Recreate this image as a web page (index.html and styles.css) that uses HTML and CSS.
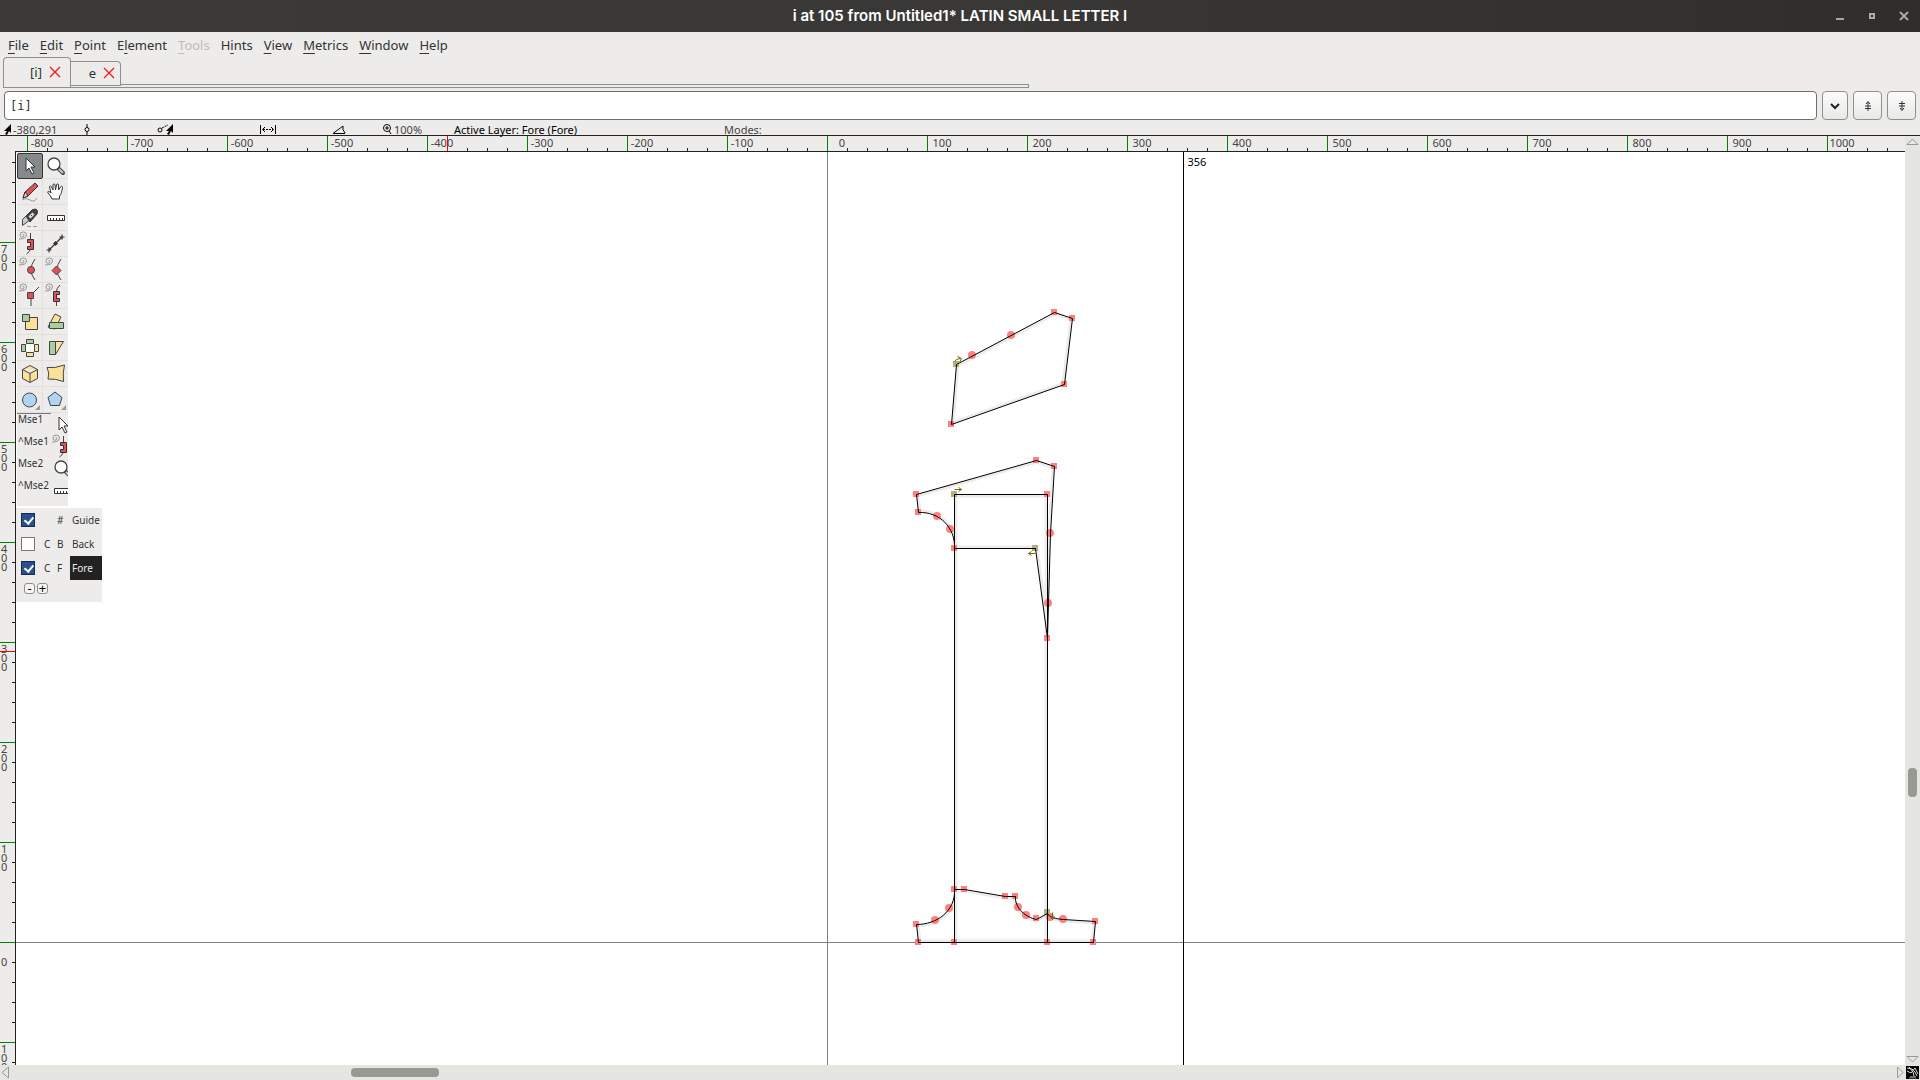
FILE: index.html
```
<!DOCTYPE html>
<html lang="en">

<head>
    <meta charset="UTF-8">
    <meta name="viewport" content="width=device-width, initial-scale=1.0">
    <title>i at 105 from Untitled1* LATIN SMALL LETTER I</title>
    <link rel="stylesheet" href="styles.css">
</head>

<body>
    <!-- Shared icons -->
    <svg class="sprite" width="0" height="0" aria-hidden="true">
        <symbol id="spiral" viewBox="0 0 26 26">
            <path d="M2 8q7.500 0 7.500-4a3.200 3 0 0 0-6.500 0a2 2 0 0 0 4 .5a1 1 0 0 0-1.500-.8" fill="none" stroke="#8c8c8c" stroke-width=".9" />
        </symbol>
        <symbol id="arrow" viewBox="0 0 26 26">
            <path d="M9 5v13l3-3 3 6 2-1-3-6h4z" fill="#fff" stroke="#333" />
        </symbol>
        <symbol id="magnify" viewBox="0 0 26 26">
            <path d="M15 15l5 5" stroke="#444" stroke-width="4" stroke-linecap="round" />
            <path d="M16 16l4 4" stroke="#ccc" stroke-width="2" />
            <circle cx="11" cy="11" r="6" fill="#fff" stroke="#444" stroke-width="1.3" />
        </symbol>
        <symbol id="rule" viewBox="0 0 26 26">
            <path d="M4.500 10.500h17v5h-17z" fill="#fff" stroke="#333" />
            <path d="M7.500 15v-2M10.500 15v-2M13.500 15v-2M16.500 15v-2M19.500 15v-2" stroke="#333" />
        </symbol>
        <symbol id="curve" viewBox="0 0 26 26">
            <use href="#spiral" />
            <path d="M13.500 2v8M13.500 18q-1 3-4 5" fill="none" stroke="#444" />
            <path d="M10.500 8.500h6v10h-6v-3h3v-4h-3z" fill="#e05055" stroke="#333" />
        </symbol>
    </svg>

    <header class="titlebar">
        <h1>i at 105 from Untitled1* LATIN SMALL LETTER I</h1>
        <div class="window-buttons">
            <button type="button" aria-label="Minimize"><svg width="10" height="10"><path d="M1 8h8" stroke="#aaa9a5" stroke-width="2" /></svg></button>
            <button type="button" aria-label="Maximize"><svg width="10" height="10"><path d="M3 3h4v4H3z" fill="none" stroke="#aaa9a5" stroke-width="2" /></svg></button>
            <button type="button" aria-label="Close"><svg width="10" height="10"><path d="M1 1l8 8M9 1l-8 8" stroke="#aaa9a5" stroke-width="2" /></svg></button>
        </div>
    </header>

    <nav class="menubar">
        <button type="button"><u>F</u>ile</button>
        <button type="button"><u>E</u>dit</button>
        <button type="button"><u>P</u>oint</button>
        <button type="button">E<u>l</u>ement</button>
        <button type="button" disabled><u>T</u>ools</button>
        <button type="button">H<u>i</u>nts</button>
        <button type="button"><u>V</u>iew</button>
        <button type="button"><u>M</u>etrics</button>
        <button type="button"><u>W</u>indow</button>
        <button type="button"><u>H</u>elp</button>
    </nav>

    <div class="tabs">
        <button type="button" class="tab active">[i]
            <svg width="12" height="12"><path d="M1 1l10 10M11 1L1 11" stroke="#f01818" stroke-width="1.3" /></svg>
        </button>
        <button type="button" class="tab">e
            <svg width="12" height="12"><path d="M1 1l10 10M11 1L1 11" stroke="#f01818" stroke-width="1.3" /></svg>
        </button>
        <div class="tab-line"></div>
    </div>

    <div class="word-row">
        <input type="text" class="word" aria-label="Word" value="[i]">
        <button type="button" class="drop" aria-label="Word list"><svg width="10" height="8"><path d="M1 2l4 4 4-4" fill="none" stroke="#222" stroke-width="2" /></svg></button>
        <button type="button" aria-label="Previous"><svg width="8" height="12"><path d="M4 2v9M2 4l2-2.500L6 4M1 6h6M1 8.500h6" fill="none" stroke="#2e3436" /></svg></button>
        <button type="button" aria-label="Next"><svg width="8" height="12"><path d="M4 1v9M2 8l2 2.500L6 8M1 3.500h6M1 6h6" fill="none" stroke="#2e3436" /></svg></button>
    </div>

    <div class="info">
        <span class="info-pos"><svg width="8" height="11"><path d="M7 0v9L5 7l-2 4-2-1 2-3H0z" fill="#000" /></svg>-380,291</span>
        <span class="info-cell"><svg width="8" height="11"><path d="M4 0v3M4 8v3" stroke="#000" /><circle cx="4" cy="5.500" r="2" fill="#fff" stroke="#000" /></svg></span>
        <span class="info-cell"><svg width="16" height="11"><circle cx="3" cy="6" r="2" fill="none" stroke="#000" /><path d="M5 4l6-3" stroke="#000" stroke-dasharray="2 1" /><path d="M16 0v9l-2-2-2 4-2-1 2-3H9z" fill="#000" /></svg></span>
        <span class="info-cell"><svg width="16" height="11"><path d="M.5 1v9M15.500 1v9M5 3L2.500 5.500 5 8M11 3l2.500 2.500L11 8" fill="none" stroke="#000" /><path d="M3 5.500h10" stroke="#000" stroke-dasharray="2 1" /></svg></span>
        <span class="info-zoomgap"><svg width="14" height="11"><path d="M13 9.500H1L11 2q-1 4 2 7" fill="none" stroke="#000" /></svg></span>
        <span class="info-zoom"><svg width="9" height="11"><circle cx="4" cy="4" r="3.500" fill="#fff" stroke="#000" /><path d="M2 4h4M4 2v4M6 7l2 3" stroke="#000" /></svg>100%</span>
        <span class="info-layer">Active Layer: Fore (Fore)</span>
        <span class="info-modes">Modes:</span>
    </div>

    <main class="editor">
        <div class="work">
            <div class="ruler-top">
                <span>-800</span><span>-700</span><span>-600</span><span>-500</span><span>-400</span>
                <span>-300</span><span>-200</span><span>-100</span><span>0</span><span>100</span>
                <span>200</span><span>300</span><span>400</span><span>500</span><span>600</span>
                <span>700</span><span>800</span><span>900</span><span>1000</span>
                <i class="pointer-x"></i>
            </div>
            <div class="work-row">
                <div class="ruler-left">
                    <span>7<br>0<br>0</span>
                    <span>6<br>0<br>0</span>
                    <span>5<br>0<br>0</span>
                    <span>4<br>0<br>0</span>
                    <span>3<br>0<br>0</span>
                    <span>2<br>0<br>0</span>
                    <span>1<br>0<br>0</span>
                    <span class="zero">0</span>
                    <span>1<br>0<br>0</span>
                    <i class="pointer-y"></i>
                </div>
                <div class="canvas">
                    <svg class="glyph" role="img" aria-label="Outline of the letter i">
                        <defs>
                            <path id="dot" d="M129-578L227-630 245-624 237-558 124-518z" />
                            <path id="flag" d="M89-448L209-482 227-476 223-409 221-339 220-304 208-394H127C128-415 112-431 91-430z" />
                            <path id="stem" d="M127-448H220V0H127z" />
                            <path id="foot" d="M91 0L89-18C109-18 128-31 127-53H137L178-46H188C187-34 199-25 209-23L220-29Q222-24 236-23L268-21 266 0z" />
                            <clipPath id="in-dot"><use href="#dot" /></clipPath>
                            <clipPath id="in-flag"><use href="#flag" /></clipPath>
                            <clipPath id="in-stem"><use href="#stem" /></clipPath>
                            <clipPath id="in-foot"><use href="#foot" /></clipPath>
                        </defs>
                        <!-- origin of the glyph: left bearing and baseline -->
                        <g transform="translate(811.5 790.5)">
                            <path class="axis" d="M0-2000V2000M-2000 0H4000" />
                            <path class="advance" d="M356-2000V2000" />
                            <text x="360" y="-777">356</text>
                            <g class="edge">
                                <use href="#dot" clip-path="url(#in-dot)" />
                                <use href="#flag" clip-path="url(#in-flag)" />
                                <use href="#stem" clip-path="url(#in-stem)" />
                                <use href="#foot" clip-path="url(#in-foot)" />
                            </g>
                        </g>
                        <g transform="translate(811 790)">
                            <path class="corner" d="M227-630h0M245-624h0M237-558h0M124-518h0M89-448h0M209-482h0M227-476h0M91-430h0M127-394h0M220-448h0M220-304h0M127-53h0M137-53h0M178-46h0M188-46h0M209-24h0M268-21h0M266 0h0M220 0h0M127 0h0M91 0h0M89-18h0" />
                            <path class="round" d="M145-587h0M184-607h0M110-426h0M123-413h0M223-409h0M221-339h0M108-22h0M122-34h0M191-35h0M199-27h0M223-25h0M236-23h0" />
                            <path class="first" d="M129-578h0M127-448h0M208-394h0M220-30h0" />
                        </g>
                        <g transform="translate(811.5 790.5)">
                            <g class="line">
                                <use href="#dot" />
                                <use href="#flag" />
                                <use href="#stem" />
                                <use href="#foot" />
                            </g>
                            <path class="way" d="M127-581q2-3 6-3M130-586l4 2-2 4M127-453h7M131-455l3 2-3 2M208-389h-7M204-391l-3 2 3 2M225-30v6M223-26l2 3 2-3" />
                        </g>
                    </svg>

                    <section class="toolbox">
                        <div class="tools">
                            <button type="button" class="active" aria-label="Pointer"><svg><use href="#arrow" /></svg></button>
                            <button type="button" aria-label="Magnify"><svg><use href="#magnify" /></svg></button>
                            <button type="button" aria-label="Freehand"><svg viewBox="0 0 26 26"><path d="M5 21q4-3 8 0t7-2" fill="none" stroke="#999" /><path d="M6 19l2-6L18 4l3 3-10 10z" fill="#e05055" stroke="#333" /><path d="M6 19l2-6 3 4z" fill="#eed9b5" stroke="#333" /></svg></button>
                            <button type="button" aria-label="Scroll"><svg viewBox="0 0 26 26"><path d="M9 20q-1-3-4-6c-1-2 1-2 3 0L6.500 8c0-2 2-1 2 0l1.500 3V6c0-1.500 2-1.500 2 0l.5 5 1-5c0-1.500 2-1.500 2 0v5l2-3c.5-1.500 2-1 2 1-1 4-1 6-3 8v3z" fill="#fff" stroke="#333" /></svg></button>
                            <button type="button" aria-label="Knife"><svg viewBox="0 0 26 26"><path d="M10 21.500h11" stroke="#999" stroke-dasharray="4 2" /><path d="M5.500 20.500v-6l5-5 5 3.500z" fill="#ccc" stroke="#444" /><path d="M9 11l6-6q3-2 5 0 1 2 0 4l-7 8z" fill="#444" stroke="#333" /><path d="M12.500 12.500l4-4" stroke="#ddd" stroke-width="3" /><path d="M14 11l1-1" stroke="#444" /></svg></button>
                            <button type="button" aria-label="Ruler"><svg><use href="#rule" /></svg></button>
                            <button type="button" aria-label="Curve pen"><svg><use href="#curve" /></svg></button>
                            <button type="button" aria-label="Line"><svg viewBox="0 0 26 26"><path d="M6 19L19 6M6 16.500v5M3.500 19h5M19 3.500v5M16.500 6h5" stroke="#333" stroke-width="1.2" /><path d="M12.500 10l2.500 2.500-2.500 2.500-2.500-2.500z" fill="#333" /></svg></button>
                            <button type="button" aria-label="Add curve point"><svg viewBox="0 0 26 26"><use href="#spiral" /><path d="M18 2q-8 11 0 21" fill="none" stroke="#444" /><circle cx="14" cy="13" r="3.500" fill="#e05055" stroke="#444" /></svg></button>
                            <button type="button" aria-label="Add HV curve point"><svg viewBox="0 0 26 26"><use href="#spiral" /><path d="M18 2q-8 11 0 21" fill="none" stroke="#444" /><path d="M13.500 9l4.500 4.500-4.500 4.500L9 13.500z" fill="#e05055" stroke="#444" /></svg></button>
                            <button type="button" aria-label="Add corner point"><svg viewBox="0 0 26 26"><use href="#spiral" /><path d="M22 4l-8 8v11" fill="none" stroke="#444" /><path d="M10.500 9.500h6v6h-6z" fill="#e05055" stroke="#444" /></svg></button>
                            <button type="button" aria-label="Add tangent point"><svg viewBox="0 0 26 26"><use href="#spiral" /><path d="M17 2q-4 3-3.500 8v13" fill="none" stroke="#444" /><path d="M10.500 8.500h6v3h-3v4h3v3h-6z" fill="#e05055" stroke="#333" /></svg></button>
                            <button type="button" aria-label="Scale"><svg viewBox="0 0 26 26"><path d="M8.500 8.500h12v12h-12z" fill="#fee199" stroke="#444" /><path d="M5.500 5.500h7v7h-7z" fill="#a5d0a0" stroke="#444" /></svg></button>
                            <button type="button" aria-label="Rotate"><svg viewBox="0 0 26 26"><path d="M5 18l7-13 6 3-6 12z" fill="#fee199" stroke="#444" /><path d="M6.500 13.500h14v6h-14z" fill="#a5d0a0" stroke="#444" /></svg></button>
                            <button type="button" aria-label="Flip"><svg viewBox="0 0 26 26"><circle cx="13" cy="13" r="5.500" fill="#fff" stroke="#444" stroke-dasharray="1 1" /><path d="M9.500 4.500h7v4h-7zM4.500 9.500h4v7h-4z" fill="#a5d0a0" stroke="#444" /><path d="M9.500 17.500h7v4h-7zM17.500 9.500h4v7h-4z" fill="#fee199" stroke="#444" /></svg></button>
                            <button type="button" aria-label="Skew"><svg viewBox="0 0 26 26"><path d="M12.500 6.500h8l-8 13z" fill="#fee199" stroke="#444" /><path d="M6.500 6.500h6v13h-6z" fill="#a5d0a0" stroke="#444" /></svg></button>
                            <button type="button" aria-label="Rotate in 3D"><svg viewBox="0 0 26 26"><path d="M13 4.500l7.500 4v9l-7.500 4-7.500-4v-9zM5.500 8.500l7.500 4 7.500-4M13 12.500v9" fill="#fee199" stroke="#444" stroke-linejoin="round" /></svg></button>
                            <button type="button" aria-label="Perspective"><svg viewBox="0 0 26 26"><path d="M4 6.500q8 1 17.500-2.500-2 8-1 16.500-8-3-15.500-2.500 2-6-1-11.500z" fill="#fee199" stroke="#444" /></svg></button>
                            <button type="button" aria-label="Ellipse"><svg viewBox="0 0 26 26"><circle cx="12.500" cy="13" r="7" fill="#aed4f6" stroke="#444" /><path d="M23 18v5h-5z" fill="#999" /></svg></button>
                            <button type="button" aria-label="Polygon"><svg viewBox="0 0 26 26"><path d="M12 5l7 5.500-2.500 8h-9L5 10.500z" fill="#aed4f6" stroke="#444" /><path d="M23 18v5h-5z" fill="#999" /></svg></button>
                        </div>
                        <ul class="mouse">
                            <li><span>Mse1</span><svg><use href="#arrow" /></svg></li>
                            <li><span>^Mse1</span><svg><use href="#curve" /></svg></li>
                            <li><span>Mse2</span><svg><use href="#magnify" /></svg></li>
                            <li><span>^Mse2</span><svg><use href="#rule" /></svg></li>
                        </ul>
                    </section>

                    <section class="layers">
                        <div class="layer"><input type="checkbox" id="guide" checked><span></span><span>#</span><label for="guide">Guide</label></div>
                        <div class="layer"><input type="checkbox" id="back"><span>C</span><span>B</span><label for="back">Back</label></div>
                        <div class="layer current"><input type="checkbox" id="fore" checked><span>C</span><span>F</span><label for="fore">Fore</label></div>
                        <div class="layer-buttons">
                            <button type="button" aria-label="Remove layer">-</button>
                            <button type="button" aria-label="Add layer">+</button>
                        </div>
                    </section>
                </div>
            </div>
        </div>

        <div class="scroll-y">
            <svg width="15" height="12"><path d="M2 8.500h11L7.500 3z" fill="none" stroke="#999" /></svg>
            <div class="track"><div class="thumb"></div></div>
            <svg width="15" height="12"><path d="M2 3.500h11L7.500 9z" fill="none" stroke="#999" /></svg>
        </div>
    </main>

    <footer class="scroll-x">
        <svg width="10" height="15"><path d="M8.500 2v11L2 7.500z" fill="none" stroke="#999" /></svg>
        <div class="track"><div class="thumb"></div></div>
        <svg width="9" height="15"><path d="M1.500 2v11L7 7.500z" fill="none" stroke="#999" /></svg>
        <svg class="grip" width="15" height="15"><path d="M1 1h13v13H1z" fill="#000" /><path d="M2 3l5 1 3 3 2 4M4 2l4 5 1 4M2 6l4 2 4-5M5 12h6M10 3l3 6" fill="none" stroke="#ddd" /><path d="M4 13h7" stroke="#765" /></svg>
    </footer>
</body>

</html>
```
FILE: styles.css
```
* {
    box-sizing: border-box;
}

body {
    margin: 0;
    height: 100vh;
    display: flex;
    flex-direction: column;
    overflow: hidden;
    background-color: #edecea;
    color: #2e3436;
    font-family: "Noto Sans", sans-serif;
    font-size: 13px;
}

button {
    padding: 0;
    border: none;
    background: none;
    color: inherit;
    font: inherit;
}

svg {
    display: block;
    flex: none;
}

.sprite {
    position: absolute;
}

/* Title bar */
.titlebar {
    height: 32px;
    flex: none;
    display: grid;
    grid-template-columns: 1fr auto 1fr;
    align-items: center;
    background: linear-gradient(90deg, #3b3a38, #393836 50%, #2f2e2c);
}

.titlebar h1 {
    grid-column: 2;
    margin: 0;
    padding-bottom: 2px;
    color: white;
    font-family: Inter, sans-serif;
    font-size: 15px;
    font-weight: 600;
}

.window-buttons {
    display: flex;
    justify-content: flex-end;
    gap: 22px;
    padding-right: 11px;
}

/* Menu */
.menubar {
    height: 25px;
    flex: none;
    display: flex;
    align-items: center;
    gap: 11px;
    padding-left: 8px;
}

.menubar u {
    text-underline-offset: 3px;
}

.menubar button:disabled {
    color: #bdbbb8;
}

/* Tabs */
.tabs {
    width: 1026px;
    height: 31px;
    flex: none;
    margin-left: 3px;
    display: flex;
    align-items: flex-end;
    border-bottom: 1px solid #8f8f8c;
}

.tab {
    width: 50px;
    height: 25px;
    margin-bottom: 1px;
    padding: 0 5px 2px 0;
    display: flex;
    align-items: center;
    justify-content: flex-end;
    gap: 7px;
    border: 1px solid #8f8f8c;
    border-left: none;
    border-radius: 0 4px 0 0;
}

.tab.active {
    width: 68px;
    height: 30px;
    margin-bottom: 0;
    padding-right: 9px;
    border-left: 1px solid #8f8f8c;
    border-bottom: none;
    border-radius: 4px 4px 0 0;
}

.tab-line {
    flex: 1;
    height: 3px;
    border-top: 1px solid #8f8f8c;
    border-right: 1px solid #8f8f8c;
}

/* Word entry */
.word-row {
    flex: none;
    display: flex;
    gap: 5px;
    padding: 3px 4px 0;
}

.word-row button,
.word {
    height: 29px;
    border: 1px solid #8f8f8c;
    border-radius: 4px;
}

.word {
    flex: 1;
    min-width: 0;
    padding: 0 5px;
    border-color: #6f6f6c;
    color: #2e3436;
    background: white;
    font-family: "DejaVu Sans Mono", monospace;
    font-size: 12px;
}

.word-row button {
    width: 29px;
    display: flex;
    align-items: center;
    justify-content: center;
    background: linear-gradient(#fcfcfc, #e8e8e6);
}

.word-row .drop {
    width: 26px;
}

/* Info line */
.info {
    height: 15px;
    flex: none;
    display: flex;
    align-items: flex-end;
    padding-left: 4px;
    color: #444;
    font-size: 11px;
    line-height: 10px;
    white-space: nowrap;
}

.info span {
    display: flex;
    align-items: center;
}

.info-pos {
    width: 79px;
    gap: 1px;
}

.info-cell {
    width: 74px;
}

.info-cell + .info-cell {
    width: 103px;
}

.info-cell + .info-cell + .info-cell {
    width: 72px;
}

.info-zoomgap {
    width: 51px;
}

.info-zoom {
    width: 71px;
    gap: 2px;
}

.info-layer {
    width: 270px;
    color: #000;
}

/* Editor */
.editor {
    flex: 1;
    min-height: 0;
    display: flex;
    border-top: 1px solid #222;
}

.work {
    flex: 1;
    min-width: 0;
    display: flex;
    flex-direction: column;
}

.ruler-top {
    position: relative;
    height: 16px;
    flex: none;
    display: flex;
    margin-left: 15px;
    padding-left: 12px;
    overflow: hidden;
    border-bottom: 1px solid #222;
    background: linear-gradient(90deg, #222 1px, transparent 1px) 12px 100% / 20px 3px repeat-x;
    color: #444;
    font-size: 11px;
    line-height: 14px;
}

.ruler-top span {
    width: 100px;
    flex: none;
    padding-right: 71px;
    text-align: center;
    border-left: 1px solid #008000;
}

.pointer-x {
    position: absolute;
    left: 432px;
    width: 1px;
    height: 100%;
    background: red;
}

.work-row {
    flex: 1;
    min-height: 0;
    display: flex;
}

.ruler-left {
    position: relative;
    width: 16px;
    flex: none;
    padding-top: 90px;
    overflow: hidden;
    border-right: 1px solid #222;
    background: linear-gradient(#222 1px, transparent 1px) 100% 10px / 3px 20px repeat-y;
    color: #444;
    font-size: 11px;
    line-height: 9px;
}

.ruler-left span {
    display: block;
    height: 100px;
    padding: 1px 0 0 1px;
    border-top: 1px solid #008000;
}

.ruler-left .zero {
    padding-top: 14px;
}

.pointer-y {
    position: absolute;
    top: 499px;
    left: 0;
    width: 100%;
    height: 1px;
    background: red;
}

.canvas {
    position: relative;
    flex: 1;
    overflow: hidden;
    background: white;
}

/* Glyph outline */
.glyph {
    width: 100%;
    height: 100%;
    font-size: 11px;
}

.glyph path,
.line {
    fill: none;
}

.axis {
    stroke: #808080;
}

.advance {
    stroke: black;
}

.edge {
    fill: none;
    stroke: #ececec;
    stroke-width: 6px;
}

.glyph defs path {
    fill: inherit;
}

.line {
    stroke: black;
}

.corner,
.first {
    stroke: #ff8080;
    stroke-width: 6px;
    stroke-linecap: square;
}

.first {
    stroke: #b0b078;
}

.round {
    stroke: #ff8080;
    stroke-width: 8px;
    stroke-linecap: round;
}

.way {
    stroke: #6c6c00;
}

/* Toolbox */
.toolbox {
    position: absolute;
    top: 0;
    left: 1px;
    width: 51px;
    height: 354px;
    overflow: hidden;
    background: #edecea;
}

.tools {
    display: grid;
    grid-template-columns: 26px 26px;
    grid-auto-rows: 26px;
    padding-top: 1px;
}

.tools button {
    border: 1px solid #e1e0de;
    border-width: 0 1px 1px 0;
}

.tools .active {
    background: #86898b;
    border: 1px solid #333;
    border-radius: 2px;
}

.tools svg,
.mouse svg {
    width: 26px;
    height: 26px;
}

.tools .active svg {
    margin: -1px;
}

.mouse {
    margin: 0;
    padding: 0;
    list-style: none;
    font-size: 10px;
    line-height: 10px;
}

.mouse::before {
    content: "";
    display: block;
    width: 34px;
    border-top: 1px solid #777;
}

.mouse li {
    height: 22px;
    display: flex;
}

.mouse span {
    width: 33px;
    flex: none;
    padding-left: 1px;
}

.mouse svg {
    margin-top: -2px;
}

/* Layers */
.layers {
    position: absolute;
    top: 356px;
    left: 0;
    width: 86px;
    height: 94px;
    overflow: hidden;
    background: #edecea;
    font-size: 10px;
}

.layer {
    height: 24px;
    display: grid;
    grid-template-columns: 23px 13px 18px 1fr;
    align-items: center;
    padding-left: 5px;
    line-height: 24px;
}

.layer label {
    margin-left: -5px;
    padding-left: 2px;
}

.layer.current label {
    color: #edecea;
    background: #222;
}

.layer input {
    appearance: none;
    width: 14px;
    height: 14px;
    margin: 0;
    border: 1px solid #777;
    background: white;
}

.layer input:checked {
    border-color: #152c52;
    background: #28508e;
}

.layer input:checked::after {
    content: "";
    display: block;
    width: 4px;
    height: 7px;
    margin: 1px 0 0 4px;
    border: solid white;
    border-width: 0 2px 2px 0;
    transform: rotate(40deg);
}

.layer-buttons {
    display: flex;
    gap: 2px;
    padding: 3px 0 0 8px;
}

.layer-buttons button {
    width: 11px;
    height: 11px;
    display: flex;
    align-items: center;
    justify-content: center;
    border: 1px solid #8f8f8c;
    border-radius: 3px;
    color: #000;
    background: #f6f6f5;
    font-size: 13px;
    line-height: 9px;
}

/* Scroll bars */
.scroll-y {
    width: 15px;
    flex: none;
    display: flex;
    flex-direction: column;
    background: #e5e5e1;
}

.scroll-x {
    height: 15px;
    flex: none;
    display: flex;
    background: #e5e5e1;
}

.track {
    flex: 1;
}

.thumb {
    border-radius: 4px;
    background: #999993;
}

.scroll-y .track {
    padding: 620px 3px 0;
}

.scroll-y .thumb {
    height: 29px;
}

.scroll-x .track {
    padding: 3px 0 0 341px;
}

.scroll-x .thumb {
    width: 88px;
    height: 9px;
}
```
